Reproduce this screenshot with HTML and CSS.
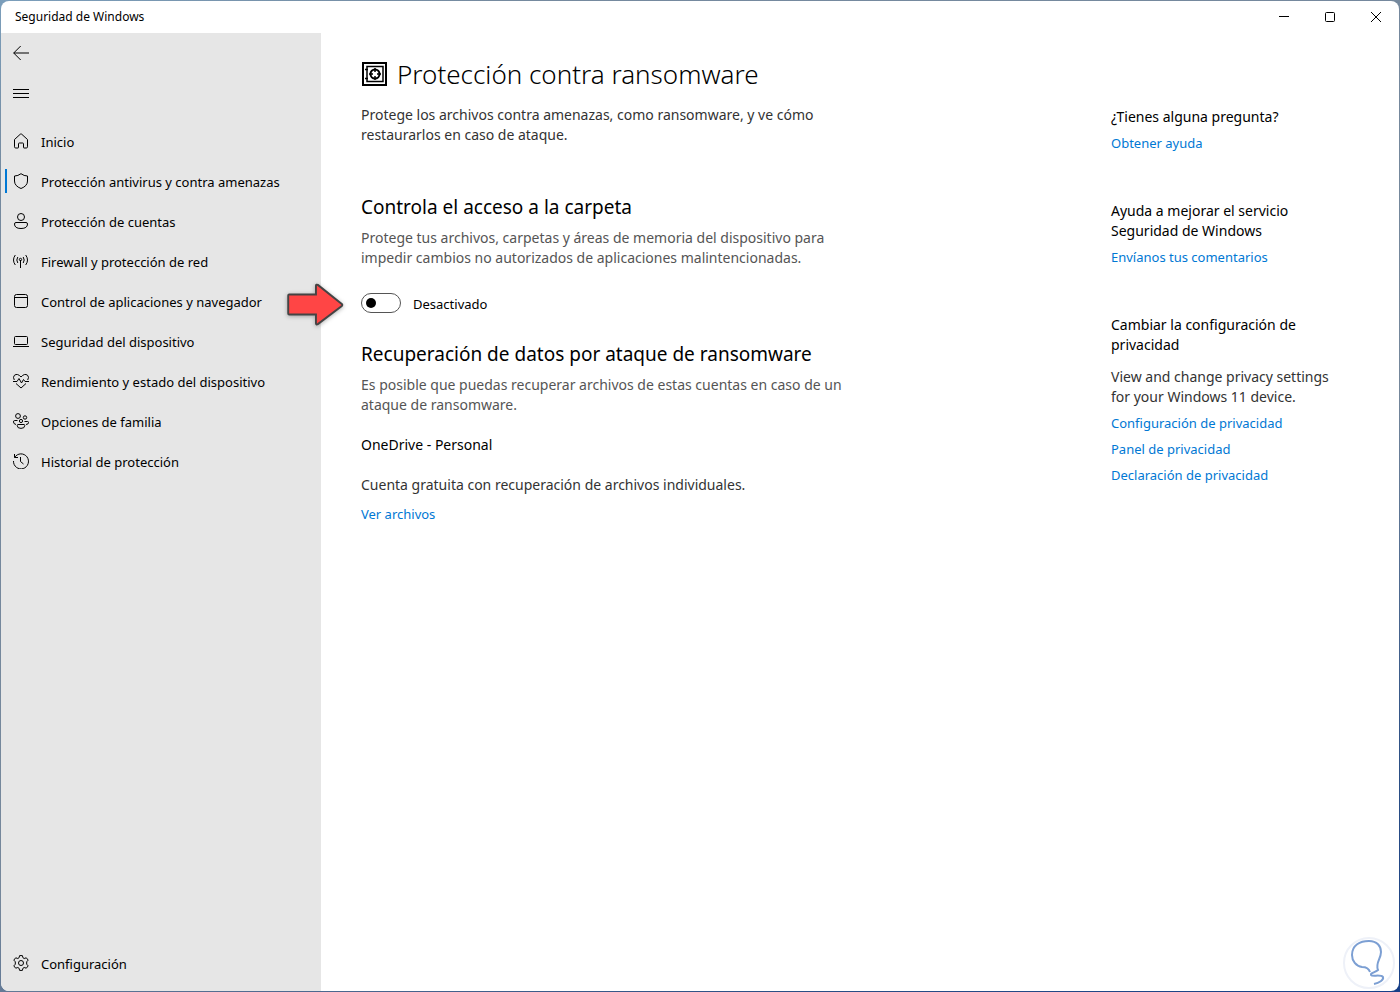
FILE: index.html
```html
<!DOCTYPE html>
<html lang="es">
<head>
<meta charset="utf-8">
<title>Seguridad de Windows</title>
<link rel="stylesheet" href="styles.css">
</head>
<body>
<div class="window">
  <header class="titlebar">
    <span class="titlebar-name">Seguridad de Windows</span>
    <div class="window-controls">
      <button type="button" class="window-button" aria-label="Minimizar"><svg width="12" height="12" viewBox="0 0 12 12"><path d="M1 5.500h10"/></svg></button>
      <button type="button" class="window-button" aria-label="Maximizar"><svg width="12" height="12" viewBox="0 0 12 12"><rect x="1.500" y="1.500" width="9" height="9" rx="1"/></svg></button>
      <button type="button" class="window-button" aria-label="Cerrar"><svg width="12" height="12" viewBox="0 0 12 12"><path d="M1 1l10 10M11 1L1 11"/></svg></button>
    </div>
  </header>
  <div class="content">
    <nav class="sidebar">
      <button type="button" class="icon-button" aria-label="Atrás"><svg class="icon" viewBox="0 0 16 16"><path d="M16 8H.7M7.700 1L.7 8l7 7"/></svg></button>
      <button type="button" class="icon-button" aria-label="Menú"><svg class="icon" viewBox="0 0 16 16"><path d="M0 4.500h16M0 8.500h16M0 12.500h16"/></svg></button>
      <ul class="nav-list">
        <li><a class="nav-item" href="#"><svg class="icon" viewBox="0 0 16 16"><path d="M1.500 6.500L7.300 1.200q.7-.6 1.400 0l5.800 5.300v7.300q0 1.200-1.200 1.200h-2.300q-.5 0-.5-.5v-3.800q0-.7-.7-.7H6.200q-.7 0-.7.7v3.800q0 .5-.5.500H2.700q-1.200 0-1.200-1.200z"/></svg><span class="nav-label">Inicio</span></a></li>
        <li><a class="nav-item nav-item-active" href="#" aria-current="page"><svg class="icon" viewBox="0 0 16 16"><path d="M8 .7Q11 3 14.500 3v5q0 5-6.500 7.500Q1.500 13 1.500 8V3Q5 3 8 .7z"/></svg><span class="nav-label">Protección antivirus y contra amenazas</span></a></li>
        <li><a class="nav-item" href="#"><svg class="icon" viewBox="0 0 16 16"><circle cx="8" cy="4" r="3.500"/><path d="M3 9.500h10q1.500 0 1.500 1.500 0 4.500-6.500 4.500T1.500 11Q1.500 9.500 3 9.500z"/></svg><span class="nav-label">Protección de cuentas</span></a></li>
        <li><a class="nav-item" href="#"><svg class="icon" viewBox="0 0 16 16"><path d="M2.300 2q-3.600 5 0 10M4.800 4q-2 3 0 6M12.700 2q3.600 5 0 10M10.200 4q2 3 0 6M7.500 7v8"/><circle cx="7.500" cy="6.500" r="1.200"/></svg><span class="nav-label">Firewall y protección de red</span></a></li>
        <li><a class="nav-item" href="#"><svg class="icon" viewBox="0 0 16 16"><rect x="1.500" y="1.500" width="13" height="13" rx="2"/><path d="M1.500 4.500h13"/></svg><span class="nav-label">Control de aplicaciones y navegador</span></a></li>
        <li><a class="nav-item" href="#"><svg class="icon" viewBox="0 0 16 16"><rect x="1.500" y="3.500" width="13" height="8" rx="1"/><path d="M0 13.500h16"/></svg><span class="nav-label">Seguridad del dispositivo</span></a></li>
        <li><a class="nav-item" href="#"><svg class="icon" viewBox="0 0 16 16"><path d="M1.300 7Q-.5 4 1.500 2.200 4.500 0 8 4q3.500-4 6.500-1.800Q16.500 4 14.700 7M0 8.500h4L6 5.500 8.500 10l2-3.500 1.500 2h4M3 10.500l5 4.500 5-4.500"/></svg><span class="nav-label">Rendimiento y estado del dispositivo</span></a></li>
        <li><a class="nav-item" href="#"><svg class="icon" viewBox="0 0 16 16"><circle cx="5" cy="3" r="2.400"/><circle cx="12" cy="4.500" r="1.700"/><circle cx="8" cy="8" r="1.600"/><path d="M5 11.500h6q.8 0 .8 1 0 2.900-3.800 2.900t-3.800-2.900q0-1 .8-1zM4.500 7.500H1.500Q.5 7.500.5 9q0 2 2.500 2.500M11.500 8.500h3.200q.8 0 .8 1 0 2-2.500 2"/></svg><span class="nav-label">Opciones de familia</span></a></li>
        <li><a class="nav-item" href="#"><svg class="icon" viewBox="0 0 16 16"><path d="M1.500 1v3.500H5M1.700 4.300A7.500 7.500 0 1 1 .5 8M7.500 4v4.500l3 2.500"/></svg><span class="nav-label">Historial de protección</span></a></li>
      </ul>
      <a class="nav-item nav-settings" href="#"><svg class="icon" viewBox="0 0 16 16"><path d="M6.600.6h2.800l.5 2.100 1.300.8 2.100-.7 1.900 2.300-1.500 1.700v2.400l1.500 1.700-1.900 2.300-2.100-.7-1.300.8-.5 2.100H6.600l-.5-2.100-1.300-.8-2.100.7-1.900-2.300 1.500-1.700V6.800L.8 5.100l1.900-2.300 2.100.7 1.300-.8z"/><circle cx="8" cy="8" r="2.500"/></svg><span class="nav-label">Configuración</span></a>
    </nav>
    <main class="page">
      <section class="primary">
        <h1 class="page-title"><svg class="safe-icon" viewBox="0 0 26 26"><rect x="2" y="2" width="23" height="22" stroke-width="2"/><rect x="6" y="5.500" width="16" height="15" stroke-width="1.500"/><circle cx="14" cy="13" r="4.500" stroke-width="2"/><path d="M14 7v4M14 15v4M8 13h4M16 13h4M4 8.500h3M4 17.500h3" stroke-width="1.500"/></svg><span>Protección contra ransomware</span></h1>
        <p class="intro">Protege los archivos contra amenazas, como ransomware, y ve cómo restaurarlos en caso de ataque.</p>
        <h2 class="section-title">Controla el acceso a la carpeta</h2>
        <p class="section-text">Protege tus archivos, carpetas y áreas de memoria del dispositivo para impedir cambios no autorizados de aplicaciones malintencionadas.</p>
        <div class="toggle-row">
          <input class="toggle" type="checkbox" role="switch" id="folder-access">
          <label class="toggle-label" for="folder-access">Desactivado</label>
          <svg class="pointer" viewBox="0 0 60 46" aria-hidden="true"><path d="M3 12h28V3q0-2 2-1l25 20q1 1 0 2L33 43q-2 1-2-1v-9H3q-1 0-1-1V13q0-1 1-1z"/></svg>
        </div>
        <h2 class="section-title">Recuperación de datos por ataque de ransomware</h2>
        <p class="section-text">Es posible que puedas recuperar archivos de estas cuentas en caso de un ataque de ransomware.</p>
        <h3 class="account-name">OneDrive - Personal</h3>
        <p class="account-text">Cuenta gratuita con recuperación de archivos individuales.</p>
        <a class="link account-link" href="#">Ver archivos</a>
      </section>
      <aside class="help">
        <section class="help-group">
          <h2 class="help-title">¿Tienes alguna pregunta?</h2>
          <a class="link" href="#">Obtener ayuda</a>
        </section>
        <section class="help-group">
          <h2 class="help-title">Ayuda a mejorar el servicio Seguridad de Windows</h2>
          <a class="link" href="#">Envíanos tus comentarios</a>
        </section>
        <section class="help-group">
          <h2 class="help-title">Cambiar la configuración de privacidad</h2>
          <p class="help-text">View and change privacy settings for your Windows 11 device.</p>
          <a class="link" href="#">Configuración de privacidad</a>
          <a class="link" href="#">Panel de privacidad</a>
          <a class="link" href="#">Declaración de privacidad</a>
        </section>
      </aside>
    </main>
  </div>
  <svg class="watermark" viewBox="0 0 54 54" aria-hidden="true"><circle cx="27" cy="27" r="25"/><path d="M28 36c-1-3-4-5-8-5-6-1-10-6-10-12C10 9 18 5 27 5c8 0 12 5 12 11 0 7-6 11-3 18-2 2-8 3-7 5s10-1 12 2c1 3-4 6-9 7"/></svg>
</div>
</body>
</html>
```
FILE: styles.css
```css
* {
  box-sizing: border-box;
}

body {
  margin: 0;
  min-height: 100vh;
  display: flex;
  padding: 1px;
  background: linear-gradient(160deg, #7b9ebb 0%, #758a9f 12%, #75879b 60%, #2b4f85 85%, #173f87 100%);
  font-family: "Noto Sans", "Open Sans", sans-serif;
  font-size: 14px;
  line-height: 20px;
  color: #000;
}

.window {
  position: relative;
  flex: 1;
  display: flex;
  flex-direction: column;
  overflow: hidden;
  border-radius: 8px;
  background: #fff;
}

.titlebar {
  display: flex;
  justify-content: space-between;
  align-items: center;
  height: 32px;
  padding-left: 14px;
  font-size: 12px;
}

.window-controls {
  display: flex;
}

.window-button {
  display: grid;
  place-items: center;
  width: 46px;
  height: 32px;
  padding: 0;
  border: 0;
  background: none;
}

svg {
  fill: none;
  stroke: #000;
}

.content {
  flex: 1;
  display: flex;
}

.sidebar {
  flex: none;
  display: flex;
  flex-direction: column;
  width: 320px;
  padding-bottom: 8px;
  background: #e6e6e6;
}

.icon {
  flex: none;
  width: 16px;
  height: 16px;
}

.icon-button {
  display: flex;
  align-items: center;
  width: 40px;
  height: 40px;
  padding: 0 12px;
  border: 0;
  background: none;
}

.nav-list {
  margin: 8px 0 0;
  padding: 0;
  list-style: none;
}

.nav-item {
  position: relative;
  display: flex;
  align-items: center;
  gap: 12px;
  height: 40px;
  padding-left: 12px;
  color: #000;
  font-size: 13px;
  text-decoration: none;
  white-space: nowrap;
}

.nav-label,
.toggle-label {
  padding-top: 2px;
}

.nav-item-active::before {
  content: "";
  position: absolute;
  left: 4px;
  top: 8px;
  width: 2px;
  height: 24px;
  background: #0078d4;
}

.nav-settings {
  margin-top: auto;
}

.page {
  flex: 1;
  display: flex;
  justify-content: space-between;
  gap: 40px;
  padding: 24px 48px 24px 40px;
}

.primary {
  max-width: 500px;
}

h1,
h2,
h3,
p {
  margin: 0;
  font-weight: 400;
}

.page-title {
  display: flex;
  align-items: center;
  gap: 10px;
  font-size: 26px;
  font-weight: 300;
  line-height: 34px;
  white-space: nowrap;
}

.safe-icon {
  width: 26px;
  height: 26px;
}

.intro {
  max-width: 480px;
  margin-top: 14px;
  color: #333;
}

.section-title {
  margin-top: 48px;
  font-size: 19px;
  line-height: 28px;
  white-space: nowrap;
}

.section-text {
  margin-top: 7px;
  color: #555;
}

.toggle-row {
  position: relative;
  display: flex;
  align-items: center;
  gap: 12px;
  margin-top: 24px;
  font-size: 13px;
}

.toggle-row + .section-title {
  margin-top: 26px;
}

.toggle {
  appearance: none;
  display: flex;
  align-items: center;
  width: 40px;
  height: 20px;
  margin: 0;
  padding: 0 4px;
  border: 1px solid #555;
  border-radius: 10px;
}

.toggle::before {
  content: "";
  width: 10px;
  height: 10px;
  border-radius: 50%;
  background: #000;
}

.toggle:checked {
  justify-content: flex-end;
}

.pointer {
  position: absolute;
  left: -75px;
  top: -9px;
  width: 58px;
  height: 44px;
  filter: drop-shadow(0 1px 2px rgba(0, 0, 0, 0.3));
}

.pointer path {
  fill: #ff4545;
  stroke: #444;
  stroke-width: 2;
}

.account-name {
  margin-top: 20px;
  font-size: 14px;
}

.account-text {
  margin-top: 20px;
  color: #333;
}

.link {
  display: block;
  margin-top: 6px;
  color: #0078d4;
  font-size: 13px;
  text-decoration: none;
}

.account-link {
  margin-top: 9px;
}

.help {
  flex: none;
  width: 240px;
  padding-top: 50px;
}

.help-group + .help-group {
  margin-top: 48px;
}

.help-title {
  max-width: 200px;
  font-size: 14px;
}

.help-text {
  margin-top: 12px;
  color: #333;
}

.watermark {
  position: absolute;
  right: 3px;
  bottom: 1px;
  width: 54px;
  height: 54px;
}

.watermark circle {
  fill: #fff;
  stroke: #eef1f8;
  stroke-width: 2;
}

.watermark path {
  stroke: #7c9fd3;
  stroke-width: 2;
}
```
